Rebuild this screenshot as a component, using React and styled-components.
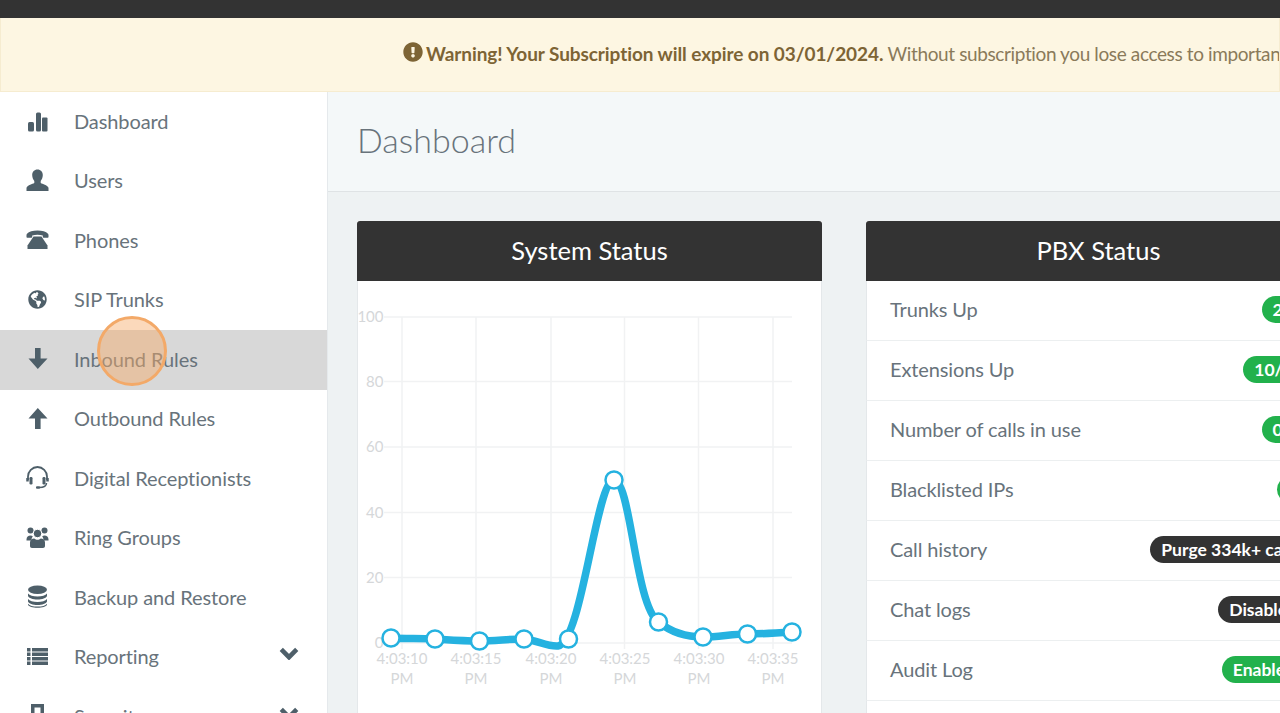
import React from 'react'
import styled, { createGlobalStyle } from 'styled-components'
import { FaGlobeAmericas, FaExclamationCircle } from 'react-icons/fa'

const Global = createGlobalStyle`
  html, body { margin: 0; padding: 0; height: 100%; overflow: hidden; background: #eef2f3; }
  body { font-family: Lato, "Open Sans", sans-serif; }
`

const Page = styled.div`
  height: 713px;
  width: 1280px;
  overflow: hidden;
  display: flex;
  flex-direction: column;
`
const TopBar = styled.div`
  height: 18px;
  flex: none;
  background: #333333;
`
const Warning = styled.div`
  height: 74px;
  flex: none;
  box-sizing: border-box;
  background: #fdf6e2;
  border: 1px solid #f6ecd0;
  border-top: 0;
  padding: 0 0 2px 402px;
  display: flex;
  align-items: center;
  gap: 3px;
  font-size: 19px;
  color: #8a7a5a;
  white-space: nowrap;
  overflow: hidden;
  letter-spacing: -0.38px;
  svg { color: #7d6435; font-size: 20px; margin-top: -4px; flex: none; }
  b { color: #7d6435; font-weight: 700; letter-spacing: -0.08px; }
`
const Body = styled.div`
  flex: 1;
  display: flex;
  min-height: 0;
`
const Sidebar = styled.nav`
  width: 328px;
  flex: none;
  box-sizing: border-box;
  background: #fff;
  border-right: 1px solid #e5e9ec;
  overflow: hidden;
`
const NavItem = styled.div`
  height: 59.5px;
  box-sizing: border-box;
  padding: 0 26px 2px;
  display: flex;
  align-items: center;
  position: relative;
  background: ${p => (p.$active ? '#d8d8d8' : 'transparent')};
  color: #68737b;
  font-size: 20px;
  letter-spacing: -0.1px;
`
const NavIcon = styled.span`
  width: 48px;
  flex: none;
  display: flex;
  color: #4e5f69;
  svg { display: block; width: 23px; height: 23px; }
`
const GlobeIcon = styled(FaGlobeAmericas)`
  && { width: 19px; height: 19px; margin: 2px; }
`
const Caret = styled.span`
  margin-left: auto;
  margin-right: 2px;
  color: #4e5f69;
  display: flex;
  margin-top: -5px;
  svg { display: block; width: 20px; height: 13px; }
`
const Pointer = styled.span`
  position: absolute;
  left: 97px;
  top: -14px;
  width: 70px;
  height: 70px;
  box-sizing: border-box;
  border-radius: 50%;
  background: rgba(247, 170, 105, 0.45);
  border: 3px solid #f3a968;
`
const Main = styled.main`
  flex: 1;
  min-width: 0;
  overflow: hidden;
`
const Header = styled.header`
  height: 100px;
  box-sizing: border-box;
  padding: 0 0 5px 29px;
  background: #f4f8f9;
  border-bottom: 1px solid #dfe3e5;
  display: flex;
  align-items: center;
  font-size: 34px;
  font-weight: 300;
  color: #68737b;
`
const Panels = styled.div`
  display: flex;
  gap: 44px;
  padding: 29px 0 0 29px;
`
const Panel = styled.section`
  width: 465px;
  flex: none;
  box-sizing: border-box;
  background: #fff;
`
const PanelTitle = styled.h2`
  margin: 0;
  height: 60px;
  box-sizing: border-box;
  padding-bottom: 2px;
  background: #333333;
  border-radius: 3px 3px 0 0;
  color: #fff;
  font-size: 25.5px;
  font-weight: 400;
  display: flex;
  align-items: center;
  justify-content: center;
`
const ChartBox = styled.div`
  height: 440px;
  border: 1px solid #e4e8ea;
  border-top: 0;
  box-sizing: border-box;
  svg { display: block; }
`
const Row = styled.div`
  height: 60px;
  box-sizing: border-box;
  border-bottom: 1px solid #eceff0;
  border-left: 1px solid #e4e8ea;
  padding: 0 17px 3px 23px;
  display: flex;
  align-items: center;
  justify-content: space-between;
  color: #68737b;
  font-size: 20px;
  letter-spacing: -0.12px;
`
const Pill = styled.span`
  background: ${p => (p.$dark ? '#333333' : '#22b14c')};
  color: #fff;
  font-weight: 700;
  font-size: 17.5px;
  letter-spacing: 0;
  line-height: 27px;
  padding: 0 ${p => p.$tail}px 0 11px;
  border-radius: 13.5px;
  white-space: nowrap;
`

const StatsIcon = () => (
  <svg viewBox="0 0 23 23" fill="currentColor">
    <rect x="2" y="13" width="6" height="9.500" rx="1.500" />
    <rect x="10" y="3.500" width="5" height="19" rx="1.500" />
    <rect x="16" y="8.500" width="5.500" height="14" rx="1" />
  </svg>
)
const UserIcon = () => (
  <svg viewBox="0 0 23 23" fill="currentColor">
    <path d="M11.500 .500c3.200 0 5.300 2.300 5.300 5.600 0 2.500-1 4.600-2.100 5.900v2c2 1 6.500 2.100 7.800 4.700V22H.500v-3.300c1.300-2.600 5.800-3.700 7.800-4.700v-2C7.200 10.700 6.200 8.600 6.200 6.100 6.200 2.800 8.300 .500 11.500 .500z" />
  </svg>
)
const PhoneIcon = () => (
  <svg viewBox="0 0 23 23" fill="currentColor">
    <path d="M11.500 2.500c4.600 0 8.500 1.200 10.500 3.200.4.400.5.900.5 1.300v2c0 .4-.3.700-.7.700h-4.300c-.4 0-.7-.3-.7-.7V7.600c-1.500-.5-3.300-.8-5.300-.8s-3.800.3-5.300.8V9c0 .4-.3.700-.7.700H1.200c-.4 0-.7-.3-.7-.7V7c0-.4.100-.9.500-1.300 2-2 5.900-3.200 10.500-3.200z" />
    <path d="M7.500 8.500h8l6 9v3.500h-20v-3.500z" />
  </svg>
)
const DownIcon = () => (
  <svg viewBox="0 0 23 23" fill="currentColor">
    <path d="M9 1h5.600v10.500h6.900L11.800 22 2.500 11.500H9z" />
  </svg>
)
const UpIcon = () => (
  <svg viewBox="0 0 23 23" fill="currentColor">
    <path d="M9 22h5.600V11.500h6.900L11.800 1 2.500 11.500H9z" />
  </svg>
)
const HeadsetIcon = () => (
  <svg viewBox="0 0 23 23" fill="none" stroke="currentColor">
    <path d="M2 14v-3.500a9.500 9.500 0 0 1 19 0V14" strokeWidth="1.800" />
    <rect x="3.500" y="11" width="3" height="7.500" rx="1.200" fill="currentColor" stroke="none" />
    <rect x="16.500" y="11" width="3" height="7.500" rx="1.200" fill="currentColor" stroke="none" />
    <path d="M1.500 12v3.500M21.500 12v3.500" strokeWidth="2.500" />
    <path d="M20.500 17c0 3.500-3.500 4.500-7.500 4.500" strokeWidth="1.500" />
    <rect x="10" y="20.300" width="4" height="2.500" rx="1" fill="currentColor" stroke="none" />
  </svg>
)
const GroupIcon = () => (
  <svg viewBox="0 0 23 23" fill="currentColor">
    <circle cx="4.500" cy="4.500" r="3" />
    <circle cx="18.500" cy="4.500" r="3" />
    <circle cx="11.500" cy="7.500" r="4.200" stroke="#fff" strokeWidth="1" />
    <path d="M.500 13.500c0-2.500 1.800-4 4-4 1 0 1.700.2 2.300.7-.6 1.200-1.300 2-1.300 3.500v.8H.500zM22.500 13.500c0-2.500-1.800-4-4-4-1 0-1.700.2-2.300.7.600 1.200 1.300 2 1.300 3.500v.8h5z" />
    <path d="M4 16.500c0-2.700 2-4 4.200-4 1.100 1 2.100 1.300 3.300 1.300s2.200-.3 3.300-1.300c2.200 0 4.200 1.300 4.200 4v3.500c0 1.200-.8 2-2 2H6c-1.200 0-2-.8-2-2z" />
  </svg>
)
const DatabaseIcon = () => (
  <svg viewBox="0 0 23 23" fill="currentColor">
    <ellipse cx="11.500" cy="4.700" rx="9.500" ry="4.200" />
    <path d="M2 8.500c1.500 2 5 3 9.500 3s8-1 9.500-3v2.500c-.8 2.200-4.800 3.500-9.500 3.500S2.800 13.200 2 11z" />
    <path d="M2 14c1.500 2 5 3 9.500 3s8-1 9.500-3v2.500c-.8 2.200-4.800 3.500-9.500 3.500S2.800 18.700 2 16.500z" />
    <path d="M2 18.800c1.500 2 5 2.800 9.500 2.800s8-.8 9.500-2.800v1c-.8 2-4.800 3-9.500 3s-8.700-1-9.500-3z" />
  </svg>
)
const ListIcon = () => (
  <svg viewBox="0 0 23 23" fill="currentColor">
    {[3, 7.500, 12, 16.500].map(y => (
      <g key={y}>
        <rect x="1" y={y} width="3.500" height="3.500" />
        <rect x="6" y={y} width="16" height="3.500" />
      </g>
    ))}
  </svg>
)
const LockIcon = () => (
  <svg viewBox="0 0 23 23" fill="currentColor">
    <path d="M5 0h13v10h-3.500V3.500h-6V10H5z" />
    <rect x="3.500" y="10" width="16" height="13" rx="1" />
  </svg>
)
const ChevronIcon = () => (
  <svg viewBox="0 0 22 14" fill="none" stroke="currentColor" strokeWidth="5" preserveAspectRatio="none">
    <path d="M2.500 2.500L11 11l8.500-8.500" />
  </svg>
)

const nav = [
  ['Dashboard', <StatsIcon />],
  ['Users', <UserIcon />],
  ['Phones', <PhoneIcon />],
  ['SIP Trunks', <GlobeIcon />],
  ['Inbound Rules', <DownIcon />, false, true],
  ['Outbound Rules', <UpIcon />],
  ['Digital Receptionists', <HeadsetIcon />],
  ['Ring Groups', <GroupIcon />],
  ['Backup and Restore', <DatabaseIcon />],
  ['Reporting', <ListIcon />, true],
  ['Security', <LockIcon />, true],
]

const rows = [
  ['Trunks Up', '2/2', false, 13],
  ['Extensions Up', '10/12', false, 11],
  ['Number of calls in use', '0/8', false, 13],
  ['Blacklisted IPs', '0', false, 16],
  ['Call history', 'Purge 334k+ calls', true, 15],
  ['Chat logs', 'Disabled', true, 17],
  ['Audit Log', 'Enabled', false, 19],
  ['Recordings', 'Enabled', false, 19],
]

// chart coords are the panel body's: panel left = 358, body top = 281
const xs = [33, 77, 121.500, 166, 210.500, 256, 300.500, 345, 389.500, 434]
const ys = [357, 358, 360, 358, 358, 199, 341, 356, 353, 351]
const curve = 'M33 357 C49 358 61 357 77 358 C93 359 105 360 121.500 360 C137 360 151 358 166 358 C178 359 190 366 200 365 C224 362 238 199 256 199 C273 199 277 325 300.500 341 C314 352 329 356 345 356 C361 356 374 353 389.500 353 C404 353 419 352 434 351'

const Chart = () => (
  <svg width="463" height="440" viewBox="0 0 463 440" fontFamily="Lato, sans-serif" fontSize="15">
    {[36, 100.500, 166, 231.500, 296.500, 362].map(y => (
      <line key={y} x1="26" x2="434" y1={y} y2={y} stroke="#f1f2f3" strokeWidth="1.500" />
    ))}
    {[44, 118, 193, 266.500, 340.500, 415].map(x => (
      <line key={x} x1={x} x2={x} y1="36" y2="368" stroke="#f1f2f3" strokeWidth="1.500" />
    ))}
    {[[36, '100'], [100.500, '80'], [166, '60'], [231.500, '40'], [296.500, '20'], [362, '0']].map(([y, t]) => (
      <text key={t} x="25.500" y={y + 5} textAnchor="end" fill="#d5d7d9">{t}</text>
    ))}
    {[[44, '4:03:10'], [118, '4:03:15'], [193, '4:03:20'], [267, '4:03:25'], [341, '4:03:30'], [415, '4:03:35']].map(([x, t]) => (
      <text key={t} x={x} textAnchor="middle" fill="#d5d7d9">
        <tspan x={x} y="383">{t}</tspan>
        <tspan x={x} y="403">PM</tspan>
      </text>
    ))}
    <path d={curve} fill="none" stroke="#25b2e0" strokeWidth="7.500" />
    {xs.map((x, i) => (
      <circle key={x} cx={x} cy={ys[i]} r="8.500" fill="#fff" stroke="#25b2e0" strokeWidth="2.500" />
    ))}
  </svg>
)

export default function App() {
  return (
    <Page>
      <Global />
      <TopBar />
      <Warning>
        <FaExclamationCircle />
        <span><b>Warning! Your Subscription will expire on 03/01/2024.</b> Without subscription you lose access to important features</span>
      </Warning>
      <Body>
        <Sidebar>
          {nav.map(([label, icon, caret, active]) => (
            <NavItem key={label} $active={active}>
              <NavIcon>{icon}</NavIcon>
              {label}
              {caret && <Caret><ChevronIcon /></Caret>}
              {active && <Pointer />}
            </NavItem>
          ))}
        </Sidebar>
        <Main>
          <Header>Dashboard</Header>
          <Panels>
            <Panel>
              <PanelTitle>System Status</PanelTitle>
              <ChartBox><Chart /></ChartBox>
            </Panel>
            <Panel>
              <PanelTitle>PBX Status</PanelTitle>
              {rows.map(([label, value, dark, tail]) => (
                <Row key={label}>
                  {label}
                  <Pill $dark={dark} $tail={tail}>{value}</Pill>
                </Row>
              ))}
            </Panel>
          </Panels>
        </Main>
      </Body>
    </Page>
  )
}
